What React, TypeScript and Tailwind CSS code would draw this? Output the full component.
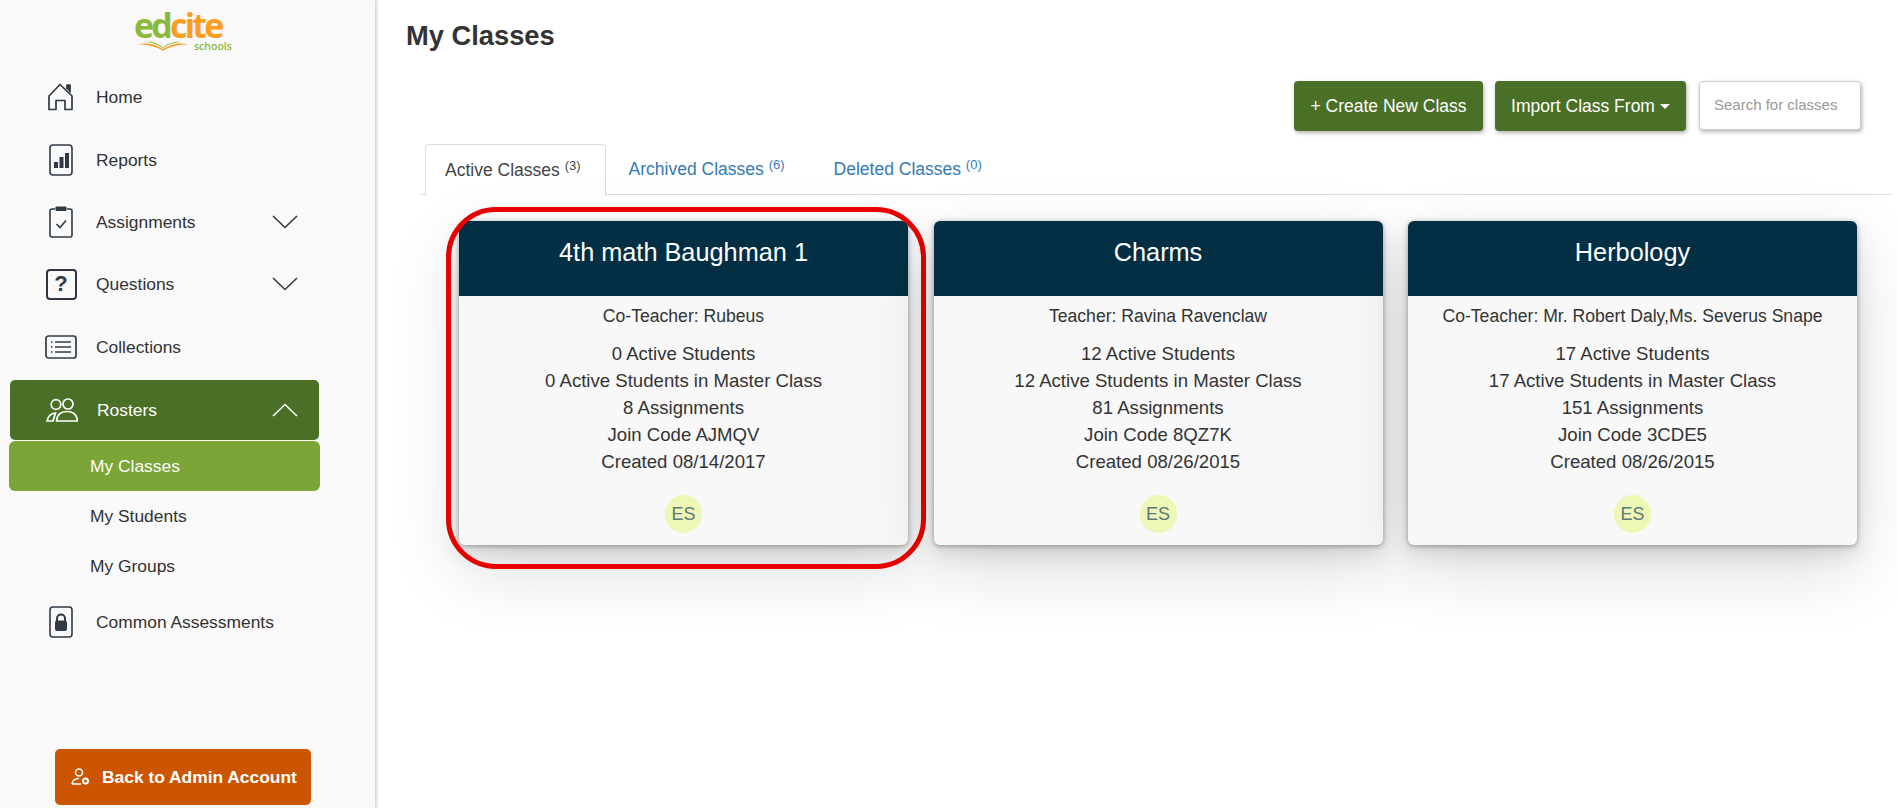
import { ReactNode } from "react";

const INK = "#2f3a45";

function HomeIcon() {
  return (
    <svg width="28" height="28" viewBox="0 0 28 28" fill="none" stroke={INK} strokeWidth="1.7" strokeLinejoin="round">
      <path d="M2 13 L13 1.5 L25 13 V26.5 H18 V17.5 H9 V26.5 H2 Z" />
      <path d="M20 6 V2 H23 V9.5" fill={INK} />
    </svg>
  );
}

function ReportsIcon() {
  return (
    <svg width="24" height="32" viewBox="0 0 24 32" fill="none">
      <rect x="1" y="1" width="22" height="30" rx="3" stroke={INK} strokeWidth="1.6" />
      <rect x="5" y="18" width="4" height="6" fill={INK} />
      <rect x="10.5" y="13" width="4" height="11" fill={INK} />
      <rect x="16" y="9" width="4" height="15" fill={INK} />
    </svg>
  );
}

function ClipboardIcon() {
  return (
    <svg width="24" height="32" viewBox="0 0 24 32" fill="none">
      <path d="M6 3 H3 A2 2 0 0 0 1 5 V29 A2 2 0 0 0 3 31 H21 A2 2 0 0 0 23 29 V5 A2 2 0 0 0 21 3 H18" stroke={INK} strokeWidth="1.6" />
      <rect x="6.5" y="0.5" width="11" height="4.5" rx="1" fill={INK} />
      <path d="M7.5 18 L11 21.5 L17 14.5" stroke={INK} strokeWidth="1.6" />
    </svg>
  );
}

function QuestionIcon() {
  return (
    <div className="flex h-[31px] w-[31px] items-center justify-center rounded-[4px] border-2 border-[#3a2f45] text-[22px] leading-none font-bold text-[#2f3a45]">
      ?
    </div>
  );
}

function ListIcon() {
  return (
    <svg width="32" height="24" viewBox="0 0 32 24" fill="none" stroke={INK}>
      <rect x="1" y="1" width="30" height="22" rx="2.5" strokeWidth="1.7" />
      <path d="M10 7 H26 M10 12 H26 M10 17 H26" strokeWidth="1.4" />
      <path d="M6 7 H7.5 M6 12 H7.5 M6 17 H7.5" strokeWidth="1.6" />
    </svg>
  );
}

function LockIcon() {
  return (
    <svg width="24" height="32" viewBox="0 0 24 32" fill="none">
      <rect x="1" y="1" width="22" height="30" rx="3" stroke={INK} strokeWidth="1.6" />
      <path d="M8 15 V12.5 A4 4 0 0 1 16 12.5 V15" stroke={INK} strokeWidth="2" />
      <rect x="6" y="14.5" width="12" height="10.5" rx="2" fill={INK} />
    </svg>
  );
}

function PeopleIcon() {
  return (
    <svg width="32" height="24" viewBox="0 0 32 24" fill="none" stroke="white" strokeWidth="1.7">
      <circle cx="10" cy="6.5" r="4.8" />
      <circle cx="22" cy="6" r="5" />
      <path d="M1 23 C2 18 5 15.5 9.5 15 L7 23 Z" />
      <path d="M10.5 23 C11 17 15 13.5 21 13.5 C27 13.5 31 17 31.5 23 Z" />
    </svg>
  );
}

function AdminIcon() {
  return (
    <svg width="19" height="18" viewBox="0 0 19 18" fill="none" stroke="white" strokeWidth="1.5">
      <circle cx="8" cy="4.5" r="3.5" />
      <path d="M1 16 C1.5 12.5 4 10.5 8 10.5 M1 16 H10" />
      <circle cx="14.5" cy="13" r="2.5" strokeWidth="2" />
    </svg>
  );
}

function Chevron({ up, color }: { up?: boolean; color: string }) {
  return (
    <svg width="26" height="14" viewBox="0 0 26 14" fill="none" stroke={color} strokeWidth="1.6">
      <path d={up ? "M1 13 L13 1.5 L25 13" : "M1 1 L13 12.5 L25 1"} />
    </svg>
  );
}

function NavItem({ icon, label, chevron }: { icon: ReactNode; label: string; chevron?: boolean }) {
  return (
    <div className="flex h-[62.4px] items-center text-[#333]">
      <div className="flex w-[96px] justify-center pr-[9px] pl-[35px]">{icon}</div>
      <span className="flex-1">{label}</span>
      {chevron && (
        <div className="mr-[77px]">
          <Chevron color={INK} />
        </div>
      )}
    </div>
  );
}

function SubItem({ label }: { label: string }) {
  return <div className="flex h-[50px] items-center pl-[90px] text-[#333]">{label}</div>;
}

function Logo() {
  return (
    <div className="h-[66px] pt-[10px] pl-[134px] [font-family:'Open_Sans',sans-serif]">
      <div className="text-[34px] leading-[30px] font-bold tracking-[-2.8px]">
        <span className="text-[#8bb93c]">ed</span>
        <span className="text-[#fb9d1e]">cite</span>
      </div>
      <div className="flex h-[12px] items-start">
        <svg width="58" height="12" viewBox="0 0 58 13" fill="none">
          <path d="M1 5 C12 2 22 5 29 10 C36 5 46 2 57 5 C46 5 36 7 29 12 C22 7 12 5 1 5 Z" fill="#fb9d1e" />
          <path d="M10 2 C18 1 25 4 29 8 C33 4 40 1 49 2 C40 3 34 5 29 9 C24 5 18 3 10 2 Z" fill="#8bb93c" />
        </svg>
        <span className="ml-[2px] text-[10.5px] leading-[12px] font-semibold text-[#8bb93c]">schools</span>
      </div>
    </div>
  );
}

function Sidebar() {
  return (
    <aside className="flex h-[808px] w-[375px] shrink-0 flex-col bg-[#f9f9f9] pb-[3px] text-[17.4px] shadow-[2px_0_3px_rgba(0,0,0,0.18)]">
      <Logo />
      <NavItem icon={<HomeIcon />} label="Home" />
      <NavItem icon={<ReportsIcon />} label="Reports" />
      <NavItem icon={<ClipboardIcon />} label="Assignments" chevron />
      <NavItem icon={<QuestionIcon />} label="Questions" chevron />
      <NavItem icon={<ListIcon />} label="Collections" />
      <div className="mt-[2px] ml-[10px] flex h-[60px] w-[309px] items-center rounded-[5px] bg-[#497026] text-white">
        <div className="flex w-[87px] justify-center pr-[9px] pl-[26px]">
          <PeopleIcon />
        </div>
        <span className="flex-1">Rosters</span>
        <div className="mr-[21px]">
          <Chevron up color="white" />
        </div>
      </div>
      <div className="mt-[1px] ml-[9px] flex h-[50px] w-[311px] items-center rounded-[6px] bg-[#7ca538] pl-[81px] text-white">
        My Classes
      </div>
      <SubItem label="My Students" />
      <SubItem label="My Groups" />
      <NavItem icon={<LockIcon />} label="Common Assessments" />
      <div className="mt-auto ml-[55px] flex h-[56px] w-[256px] items-center rounded-[5px] bg-[#cc5500] pl-[16px] font-bold text-white">
        <AdminIcon />
        <span className="ml-[12px]">Back to Admin Account</span>
      </div>
    </aside>
  );
}

type ClassInfo = {
  name: string;
  teacher: string;
  students: number;
  assignments: number;
  code: string;
  created: string;
  highlighted?: boolean;
};

const classes: ClassInfo[] = [
  { name: "4th math Baughman 1", teacher: "Co-Teacher: Rubeus", students: 0, assignments: 8, code: "AJMQV", created: "08/14/2017", highlighted: true },
  { name: "Charms", teacher: "Teacher: Ravina Ravenclaw", students: 12, assignments: 81, code: "8QZ7K", created: "08/26/2015" },
  { name: "Herbology", teacher: "Co-Teacher: Mr. Robert Daly,Ms. Severus Snape", students: 17, assignments: 151, code: "3CDE5", created: "08/26/2015" },
];

function ClassCard({ info }: { info: ClassInfo }) {
  return (
    <div className="relative h-[324px] w-[449px] rounded-[6px] bg-[#f8f8f8] text-center text-[#333] shadow-[0_1px_5px_rgba(0,0,0,0.35),0_10px_20px_rgba(0,0,0,0.1),0_24px_70px_rgba(0,0,0,0.14)]">
      <div className="flex h-[75px] items-start justify-center rounded-t-[6px] bg-[#022f43] pt-[15px] text-[25.3px] leading-[32px] text-white">
        {info.name}
      </div>
      <div className="pt-[9px] text-[17.6px] leading-[22px]">{info.teacher}</div>
      <div className="pt-[13px] text-[18.6px] leading-[27px]">
        <div>{info.students} Active Students</div>
        <div>{info.students} Active Students in Master Class</div>
        <div>{info.assignments} Assignments</div>
        <div>Join Code {info.code}</div>
        <div>Created {info.created}</div>
      </div>
      <div className="mx-auto mt-[20px] flex h-[38px] w-[37px] items-center justify-center rounded-full bg-[#eef7b5] text-[18px] text-[#5a7a78]">
        ES
      </div>
      {info.highlighted && (
        <div className="absolute top-[-14px] left-[-13px] h-[362px] w-[480px] rounded-[50px] border-[5px] border-[#e60000]" />
      )}
    </div>
  );
}

function Tab({ label, count, active }: { label: string; count: number; active?: boolean }) {
  return (
    <div
      className={
        active
          ? "-mb-px h-[52px] rounded-t-[4px] border border-b-0 border-[#ddd] bg-white pt-[12px] pr-[24px] pl-[19px] text-[#444]"
          : "h-[51px] pt-[12px] pr-[26px] pl-[23px] text-[#337ab7]"
      }
    >
      {label} <sup className="text-[13px]">({count})</sup>
    </div>
  );
}

export default function App() {
  return (
    <div className="flex h-[808px] w-[1897px] overflow-hidden bg-white text-[17.5px] [font-family:'Liberation_Sans',Arial,sans-serif]">
      <Sidebar />
      <main className="flex-1 pt-[21px] pl-[31px]">
        <h1 className="text-[27.3px] leading-[30px] font-bold text-[#333]">My Classes</h1>
        <div className="mt-[30px] flex justify-end gap-[12px] pr-[36px]">
          <div className="flex h-[50px] w-[189px] items-center justify-center rounded-[4px] bg-[#497026] text-white shadow-[1px_2px_4px_rgba(0,0,0,0.3)]">
            + Create New Class
          </div>
          <div className="flex h-[50px] w-[191px] items-center justify-center rounded-[4px] bg-[#497026] text-white shadow-[1px_2px_4px_rgba(0,0,0,0.3)]">
            Import Class From
            <span className="ml-[5px] border-x-[5px] border-t-[5px] border-x-transparent border-t-white" />
          </div>
          <div className="ml-[1px] flex h-[49px] w-[162px] items-center rounded-[4px] border border-[#ccc] bg-white pl-[14px] text-[15px] text-[#999] shadow-[1px_2px_4px_rgba(0,0,0,0.3)]">
            Search for classes
          </div>
        </div>
        <div className="mt-[13px] mr-[5px] ml-[14px] flex h-[51px] items-start border-b border-[#ddd] pl-[5px]">
          <Tab label="Active Classes" count={3} active />
          <Tab label="Archived Classes" count={6} />
          <Tab label="Deleted Classes" count={0} />
        </div>
        <div className="mt-[26px] ml-[53px] flex gap-[25.5px]">
          {classes.map((c) => (
            <ClassCard key={c.name} info={c} />
          ))}
        </div>
      </main>
    </div>
  );
}
